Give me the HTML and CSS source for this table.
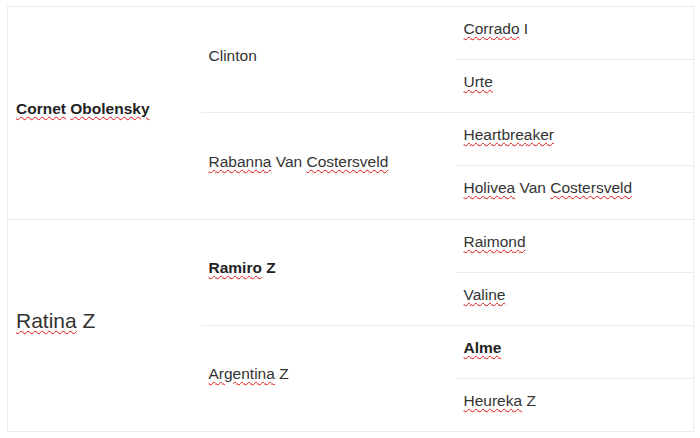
FILE: index.html
```html
<!DOCTYPE html>
<html>
<head>
<meta charset="utf-8">
<link rel="stylesheet" href="styles.css">
</head>
<body>
<table class="pedigree">
  <colgroup>
    <col class="c1"><col class="c2"><col class="c3">
  </colgroup>
  <tr>
    <td rowspan="4" class="g1 sep"><b><span class="sp">Cornet</span> <span class="sp">Obolensky</span></b></td>
    <td rowspan="2" class="g2">Clinton</td>
    <td class="g3"><span class="sp">Corrado</span> I</td>
  </tr>
  <tr><td class="g3"><span class="sp">Urte</span></td></tr>
  <tr>
    <td rowspan="2" class="g2 sep"><span class="sp">Rabanna</span> Van <span class="sp">Costersveld</span></td>
    <td class="g3"><span class="sp">Heartbreaker</span></td>
  </tr>
  <tr><td class="g3 sep"><span class="sp">Holivea</span> Van <span class="sp">Costersveld</span></td></tr>
  <tr>
    <td rowspan="4" class="g1 big"><span class="sp">Ratina</span> Z</td>
    <td rowspan="2" class="g2"><b><span class="sp">Ramiro</span> Z</b></td>
    <td class="g3"><span class="sp">Raimond</span></td>
  </tr>
  <tr><td class="g3"><span class="sp">Valine</span></td></tr>
  <tr>
    <td rowspan="2" class="g2 last"><span class="sp">Argentina</span> Z</td>
    <td class="g3"><b><span class="sp">Alme</span></b></td>
  </tr>
  <tr><td class="g3 last"><span class="sp">Heureka</span> Z</td></tr>
</table>
</body>
</html>
```
FILE: styles.css
```css
html, body {
  margin: 0;
  padding: 0;
  background: #ffffff;
}
body {
  padding: 6px 0 0 7px;
  font-family: "Liberation Sans", Arial, sans-serif;
  color: #333333;
}
.pedigree {
  border-collapse: collapse;
  table-layout: fixed;
  width: 686px;
  height: 426px;
  border: 1px solid #ebebeb;
}
.c1 { width: 193px; }
.c2 { width: 255px; }
.c3 { width: 238px; }
.pedigree tr { height: 52px; }
.pedigree td {
  padding: 0 0 8px 8px;
  vertical-align: middle;
  font-size: 15.5px;
  line-height: 18px;
  border-bottom: 1px solid #ebebeb;
}
.pedigree td.last { border-bottom: none; }
.pedigree td.g1 { border-bottom: none; }
.pedigree td.g1.sep { border-bottom: 1px solid #ebebeb; }
.pedigree td.big {
  font-size: 21px;
  line-height: 24px;
}
b { color: #222222; }
.sp {
  text-decoration: underline wavy #e01010;
  text-decoration-thickness: 1px;
  text-underline-offset: 2px;
}
```
